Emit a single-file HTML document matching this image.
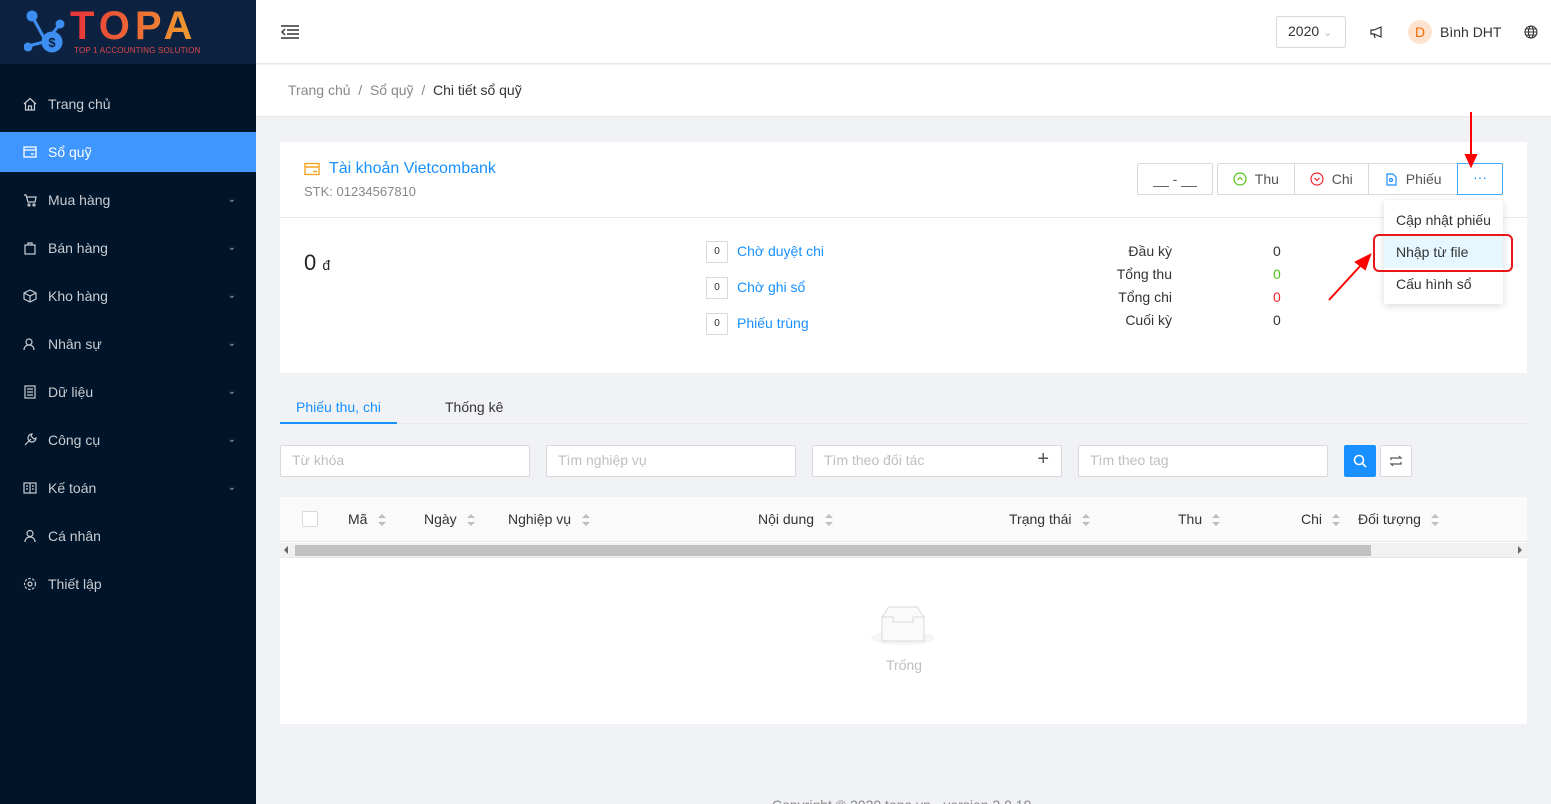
<!DOCTYPE html>
<html><head><meta charset="utf-8"><style>
*{box-sizing:border-box;margin:0;padding:0}
html{width:1551px;height:804px;overflow:hidden}
body{width:1551px;height:804px;overflow:hidden;font-family:"Liberation Sans",sans-serif;font-size:14px;color:#333;background:#f0f2f5;position:relative}
.abs{position:absolute}
.sb{left:0;top:0;width:256px;height:804px;background:#001529}
.logo{left:0;top:0;width:256px;height:64px;background:#0c2240}
.mi{position:absolute;left:0;width:256px;height:40px;line-height:40px;padding-left:48px;color:#c9cdd4;font-size:14px}
.mi .ic{position:absolute;left:23px;top:13px;width:14px;height:14px}
.mi .ch{position:absolute;right:20px;top:0;font-size:10px;color:#aaa}
.sel{background:#4096ff;color:#fff}
.inp{position:absolute;top:445px;height:32px;border:1px solid #d9d9d9;border-radius:2px;background:#fff;color:#bfbfbf;padding:6px 11px;font-size:14px}
.th{position:absolute;top:511px;font-size:14px;color:#333}
.sort{position:absolute;top:513px;width:8px;height:14px}
.btn{position:absolute;top:163px;height:32px;border:1px solid #d9d9d9;background:#fff;line-height:30px;font-size:14px;color:#555}
</style></head><body>
<div class="abs sb"></div>
<div class="abs logo">
<svg class="abs" style="left:24px;top:10px" width="44" height="44" viewBox="0 0 44 44"><g stroke="#3d8ef0" stroke-width="3" fill="#3d8ef0"><line x1="8" y1="6" x2="20" y2="28"/><line x1="36" y1="14" x2="28" y2="24"/><line x1="4" y1="36" x2="20" y2="32"/><circle cx="8" cy="6" r="4"/><circle cx="36" cy="14" r="3"/><circle cx="4" cy="37" r="3"/><circle cx="28" cy="32" r="9"/></g><text x="28" y="37" text-anchor="middle" font-size="13" font-weight="bold" fill="#0c2240" font-family="Liberation Sans">$</text></svg>
<div class="abs" style="left:70px;top:4px;font-size:40px;font-weight:bold;letter-spacing:5px;background:linear-gradient(90deg,#e8323a,#f0a030);-webkit-background-clip:text;color:transparent">TOPA</div>
<div class="abs" style="left:74px;top:46px;font-size:8px;color:#e0484a;letter-spacing:0.2px">TOP 1 ACCOUNTING SOLUTION</div>
</div>
<div class="mi" style="top:84px"><svg class="ic" viewBox="0 0 14 14" fill="none" stroke="#c9cdd4" stroke-width="1.2"><path d="M1 7L7 1.5 13 7M2.5 6v7h9V6M5.5 13V9h3v4"/></svg>Trang chủ</div>
<div class="mi sel" style="top:132px"><svg class="ic" viewBox="0 0 14 14" fill="none" stroke="#fff" stroke-width="1.3"><rect x="1" y="2" width="12" height="10"/><path d="M1 5h12M8 9h3"/></svg>Sổ quỹ</div>
<div class="mi" style="top:180px"><svg class="ic" viewBox="0 0 14 14" fill="none" stroke="#c9cdd4" stroke-width="1.2"><path d="M1 2h2l2 7h7l1-5H4"/><circle cx="6" cy="12" r="1"/><circle cx="11" cy="12" r="1"/></svg>Mua hàng<span class="ch">&#8964;</span></div>
<div class="mi" style="top:228px"><svg class="ic" viewBox="0 0 14 14" fill="none" stroke="#c9cdd4" stroke-width="1.2"><rect x="2" y="4" width="10" height="9"/><path d="M5 4V2h4v2"/></svg>Bán hàng<span class="ch">&#8964;</span></div>
<div class="mi" style="top:276px"><svg class="ic" viewBox="0 0 14 14" fill="none" stroke="#c9cdd4" stroke-width="1.2"><path d="M7 1l6 3v6l-6 3-6-3V4zM1 4l6 3 6-3M7 7v6"/></svg>Kho hàng<span class="ch">&#8964;</span></div>
<div class="mi" style="top:324px"><svg class="ic" viewBox="0 0 14 14" fill="none" stroke="#c9cdd4" stroke-width="1.2"><circle cx="6" cy="5" r="3"/><path d="M1 13c0-3 2-5 5-5s5 2 5 5"/></svg>Nhân sự<span class="ch">&#8964;</span></div>
<div class="mi" style="top:372px"><svg class="ic" viewBox="0 0 14 14" fill="none" stroke="#c9cdd4" stroke-width="1.2"><rect x="2" y="1" width="10" height="12"/><path d="M4 4h6M4 7h6M4 10h6"/></svg>Dữ liệu<span class="ch">&#8964;</span></div>
<div class="mi" style="top:420px"><svg class="ic" viewBox="0 0 14 14" fill="none" stroke="#c9cdd4" stroke-width="1.2"><path d="M2 12l6-6M9 1a4 4 0 104 4l-2 1-3-3z"/></svg>Công cụ<span class="ch">&#8964;</span></div>
<div class="mi" style="top:468px"><svg class="ic" viewBox="0 0 14 14" fill="none" stroke="#c9cdd4" stroke-width="1.2"><rect x="1" y="2" width="12" height="10"/><path d="M7 2v10M3 5h2M9 5h2M3 8h2M9 8h2"/></svg>Kế toán<span class="ch">&#8964;</span></div>
<div class="mi" style="top:516px"><svg class="ic" viewBox="0 0 14 14" fill="none" stroke="#c9cdd4" stroke-width="1.2"><circle cx="7" cy="4.5" r="3"/><path d="M2 13c0-3 2-5 5-5s5 2 5 5"/></svg>Cá nhân</div>
<div class="mi" style="top:564px"><svg class="ic" viewBox="0 0 14 14" fill="none" stroke="#c9cdd4" stroke-width="1.2"><circle cx="7" cy="7" r="2"/><circle cx="7" cy="7" r="5.5" stroke-dasharray="2.5 1.5"/></svg>Thiết lập</div>

<div class="abs" style="left:256px;top:0;width:1295px;height:64px;background:#fff;border-bottom:1px solid #e8e8e8"></div>
<svg class="abs" style="left:281px;top:25px" width="18" height="14" viewBox="0 0 18 14" stroke="#333" stroke-width="1.5" fill="none"><path d="M0 1h18M6 5h12M6 9h12M0 13h18M4 4L1 7l3 3"/></svg>
<div class="abs" style="left:1276px;top:16px;width:70px;height:32px;border:1px solid #d9d9d9;border-radius:2px;padding:6px 11px;font-size:14px">2020 <span style="color:#bbb;font-size:11px">&#8964;</span></div>
<svg class="abs" style="left:1370px;top:25px" width="14" height="14" viewBox="0 0 14 14" fill="none" stroke="#333" stroke-width="1.2"><path d="M1 5h3l7-3v10L4 9H1zM4 9l1 4"/></svg>
<div class="abs" style="left:1408px;top:20px;width:24px;height:24px;border-radius:50%;background:#fde3cf;color:#f56a00;text-align:center;line-height:24px;font-size:14px">D</div>
<div class="abs" style="left:1440px;top:24px;font-size:14px">Bình DHT</div>
<svg class="abs" style="left:1524px;top:25px" width="14" height="14" viewBox="0 0 14 14" fill="none" stroke="#333" stroke-width="1.1"><circle cx="7" cy="7" r="6"/><ellipse cx="7" cy="7" rx="2.5" ry="6"/><path d="M1 7h12M2 4h10M2 10h10"/></svg>

<div class="abs" style="left:256px;top:65px;width:1295px;height:52px;background:#fff;border-bottom:1px solid #e8e8e8"></div>
<div class="abs" style="left:288px;top:82px;color:#888">Trang chủ &nbsp;/&nbsp; Sổ quỹ &nbsp;/&nbsp; <span style="color:#333">Chi tiết sổ quỹ</span></div>

<div class="abs" style="left:280px;top:142px;width:1247px;height:231px;background:#fff"></div>
<div class="abs" style="left:280px;top:217px;width:1247px;height:1px;background:#e8e8e8"></div>
<svg class="abs" style="left:304px;top:162px" width="16" height="14" viewBox="0 0 16 14" fill="none" stroke="#f5a623" stroke-width="1.4"><rect x="1" y="1.5" width="14" height="11"/><path d="M1 5h14M9 9.5h4"/></svg>
<div class="abs" style="left:329px;top:160px;color:#1890ff;font-size:16px">Tài khoản Vietcombank</div>
<div class="abs" style="left:304px;top:184px;color:#888;font-size:13px">STK: 01234567810</div>

<div class="btn" style="left:1137px;width:76px;border-radius:2px;text-align:center">__ - __</div>
<div class="btn" style="left:1217px;width:78px;border-radius:2px 0 0 2px;padding-left:15px"><svg style="vertical-align:-2px" width="14" height="14" viewBox="0 0 14 14" fill="none" stroke="#52c41a" stroke-width="1.2"><circle cx="7" cy="7" r="6"/><path d="M4.5 8L7 5.5 9.5 8"/></svg> &nbsp;Thu</div>
<div class="btn" style="left:1294px;width:75px;padding-left:15px"><svg style="vertical-align:-2px" width="14" height="14" viewBox="0 0 14 14" fill="none" stroke="#f5222d" stroke-width="1.2"><circle cx="7" cy="7" r="6"/><path d="M4.5 6L7 8.5 9.5 6"/></svg> &nbsp;Chi</div>
<div class="btn" style="left:1368px;width:90px;padding-left:15px"><svg style="vertical-align:-2px" width="14" height="14" viewBox="0 0 14 14" fill="none" stroke="#1890ff" stroke-width="1.2"><path d="M3 2h6l3 3v8H3z"/><circle cx="7" cy="8" r="1.5"/></svg> &nbsp;Phiếu</div>
<div class="btn" style="left:1457px;width:46px;border-color:#40a9ff;border-radius:0 2px 2px 0;text-align:center;color:#1890ff;line-height:26px">···</div>

<div class="abs" style="left:304px;top:250px;font-size:22px;color:#222">0 <span style="font-size:14px">đ</span></div>
<div class="abs" style="left:706px;top:241px;width:22px;height:22px;border:1px solid #d9d9d9;font-size:10px;text-align:center;line-height:20px">0</div>
<div class="abs" style="left:737px;top:243px;color:#1890ff">Chờ duyệt chi</div>
<div class="abs" style="left:706px;top:277px;width:22px;height:22px;border:1px solid #d9d9d9;font-size:10px;text-align:center;line-height:20px">0</div>
<div class="abs" style="left:737px;top:279px;color:#1890ff">Chờ ghi sổ</div>
<div class="abs" style="left:706px;top:313px;width:22px;height:22px;border:1px solid #d9d9d9;font-size:10px;text-align:center;line-height:20px">0</div>
<div class="abs" style="left:737px;top:315px;color:#1890ff">Phiếu trùng</div>

<div class="abs" style="left:1072px;top:240px;width:100px;text-align:right;line-height:23px">Đầu kỳ<br>Tổng thu<br>Tổng chi<br>Cuối kỳ</div>
<div class="abs" style="left:1273px;top:240px;line-height:23px">0<br><span style="color:#52c41a">0</span><br><span style="color:#f5222d">0</span><br>0</div>

<div class="abs" style="left:1384px;top:200px;width:119px;height:104px;background:#fff;box-shadow:0 2px 8px rgba(0,0,0,.15);border-radius:2px"></div>
<div class="abs" style="left:1396px;top:212px">Cập nhật phiếu</div>
<div class="abs" style="left:1384px;top:236px;width:119px;height:32px;background:#e6f7ff"></div>
<div class="abs" style="left:1396px;top:244px">Nhập từ file</div>
<div class="abs" style="left:1396px;top:276px">Cấu hình sổ</div>
<div class="abs" style="left:1373px;top:234px;width:140px;height:38px;border:2px solid #e8161a;border-radius:6px"></div>
<svg class="abs" style="left:1320px;top:108px" width="160" height="200" viewBox="1320 108 160 200"><g stroke="#f00" stroke-width="2" fill="#f00"><line x1="1471" y1="112" x2="1471" y2="158"/><path d="M1466 155h10l-5 11z"/><line x1="1329" y1="300" x2="1362" y2="264"/><path d="M1356 262l14-7-5 14z"/></g></svg>

<div class="abs" style="left:280px;top:423px;width:1247px;height:1px;background:#e8e8e8"></div>
<div class="abs" style="left:296px;top:399px;color:#1890ff">Phiếu thu, chi</div>
<div class="abs" style="left:280px;top:422px;width:117px;height:2px;background:#1890ff"></div>
<div class="abs" style="left:445px;top:399px">Thống kê</div>

<div class="inp" style="left:280px;width:250px">Từ khóa</div>
<div class="inp" style="left:546px;width:250px">Tìm nghiệp vụ</div>
<div class="inp" style="left:812px;width:250px">Tìm theo đối tác<span style="position:absolute;right:12px;top:2px;color:#555;font-size:20px">+</span></div>
<div class="inp" style="left:1078px;width:250px">Tìm theo tag</div>
<div class="abs" style="left:1344px;top:445px;width:32px;height:32px;background:#1890ff;border-radius:2px"><svg style="margin:9px" width="14" height="14" viewBox="0 0 14 14" fill="none" stroke="#fff" stroke-width="1.6"><circle cx="6" cy="6" r="4.5"/><path d="M9.5 9.5L13 13"/></svg></div>
<div class="abs" style="left:1380px;top:445px;width:32px;height:32px;border:1px solid #d9d9d9;background:#fff;border-radius:2px"><svg style="margin:8px" width="14" height="14" viewBox="0 0 14 14" fill="none" stroke="#555" stroke-width="1.2"><path d="M2 6V4h10L10 2M12 8v2H2l2 2"/></svg></div>

<div class="abs" style="left:280px;top:497px;width:1247px;height:227px;background:#fff"></div>
<div class="abs" style="left:280px;top:497px;width:1247px;height:45px;background:#fafafa;border-bottom:1px solid #e8e8e8"></div>
<div class="abs" style="left:302px;top:511px;width:16px;height:16px;border:1px solid #d9d9d9;border-radius:2px;background:#fff"></div>
<div class="th" style="left:348px">Mã</div>
<div class="th" style="left:424px">Ngày</div>
<div class="th" style="left:508px">Nghiệp vụ</div>
<div class="th" style="left:758px">Nội dung</div>
<div class="th" style="left:1009px">Trạng thái</div>
<div class="th" style="left:1178px">Thu</div>
<div class="th" style="left:1301px">Chi</div>
<div class="th" style="left:1358px">Đối tượng</div>
<svg width="0" height="0" style="position:absolute"><defs><g id="s"><path d="M0 5L4 1 8 5z M0 9L4 13 8 9z" fill="#bfbfbf"/></g></defs></svg>
<svg class="sort" style="left:378px"><use href="#s"/></svg>
<svg class="sort" style="left:467px"><use href="#s"/></svg>
<svg class="sort" style="left:582px"><use href="#s"/></svg>
<svg class="sort" style="left:825px"><use href="#s"/></svg>
<svg class="sort" style="left:1082px"><use href="#s"/></svg>
<svg class="sort" style="left:1212px"><use href="#s"/></svg>
<svg class="sort" style="left:1332px"><use href="#s"/></svg>
<svg class="sort" style="left:1431px"><use href="#s"/></svg>
<div class="abs" style="left:280px;top:543px;width:1247px;height:15px;background:#f1f1f1;border-bottom:1px solid #e8e8e8"></div>
<div class="abs" style="left:295px;top:545px;width:1076px;height:11px;background:#c1c1c1"></div>
<div class="abs" style="left:284px;top:546px;width:0;height:0;border:4px solid transparent;border-right:4px solid #666;border-left:0"></div>
<div class="abs" style="left:1518px;top:546px;width:0;height:0;border:4px solid transparent;border-left:4px solid #666;border-right:0"></div>
<svg class="abs" style="left:870px;top:605px" width="66" height="42" viewBox="0 0 66 42"><ellipse cx="33" cy="33" rx="32" ry="7" fill="#f5f5f5"/><path d="M12 12L19 2h28l7 10v24H12z" fill="#fafafa" stroke="#d9d9d9"/><path d="M12 12h11v5h20v-5h11" fill="none" stroke="#d9d9d9"/></svg>
<div class="abs" style="left:886px;top:657px;color:#bfbfbf">Trống</div>

<div class="abs" style="left:772px;top:797px;color:#888">Copyright © 2020 topa.vn - version 2.0.19</div>
</body></html>
